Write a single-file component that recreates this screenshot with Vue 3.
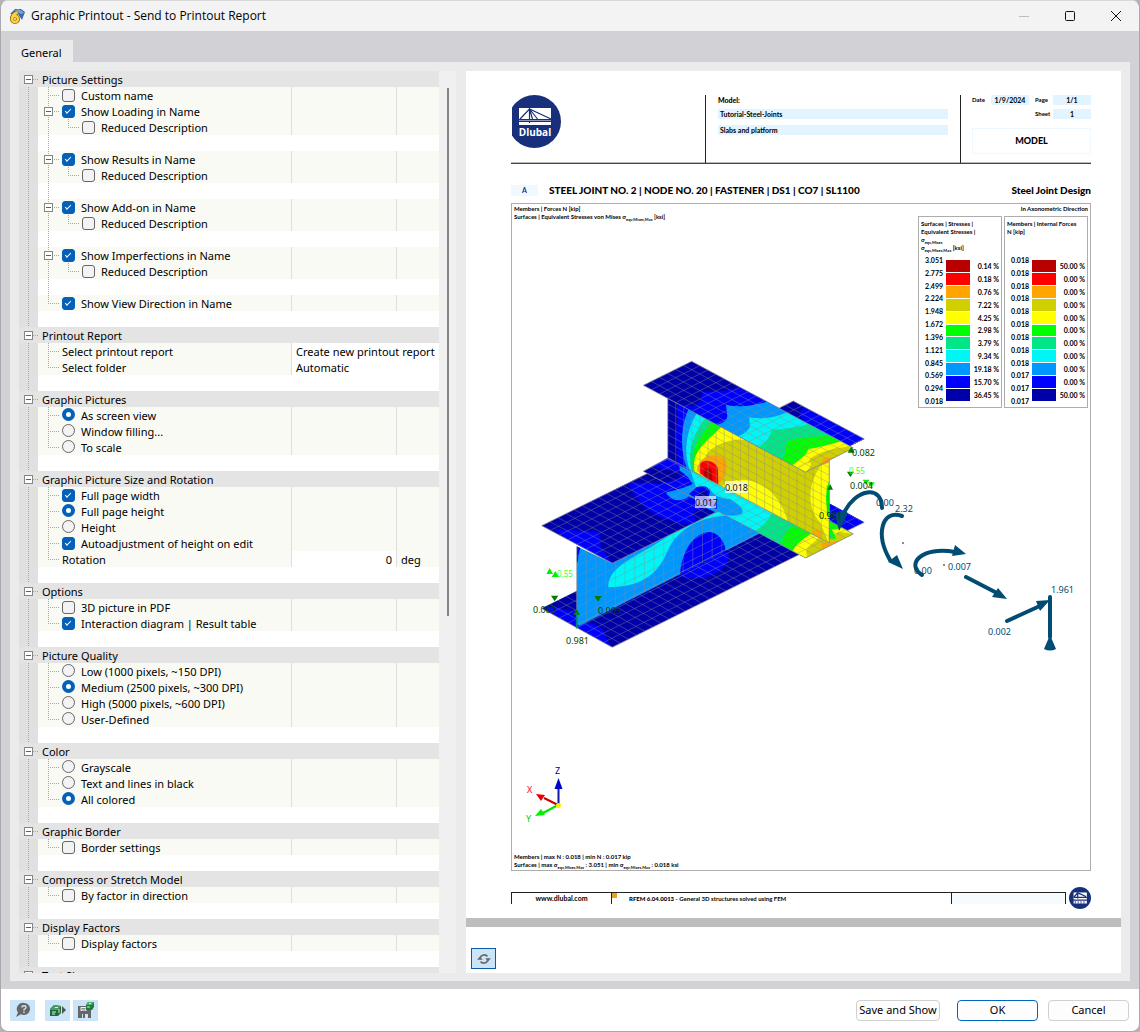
<script setup>
import { reactive, computed } from 'vue'

const check = (label, on = false, extra = {}) => ({ kind: 'checkbox', label, on, ...extra })
const radio = (label, on = false) => ({ kind: 'radio', label, on })

const sections = reactive([
  {
    title: 'Picture Settings',
    items: [
      check('Custom name'),
      check('Show Loading in Name', true, { parent: true }),
      check('Reduced Description', false, { child: true }),
      { kind: 'gap' },
      check('Show Results in Name', true, { parent: true }),
      check('Reduced Description', false, { child: true }),
      { kind: 'gap' },
      check('Show Add-on in Name', true, { parent: true }),
      check('Reduced Description', false, { child: true }),
      { kind: 'gap' },
      check('Show Imperfections in Name', true, { parent: true }),
      check('Reduced Description', false, { child: true }),
      { kind: 'gap' },
      check('Show View Direction in Name', true)
    ]
  },
  {
    title: 'Printout Report',
    items: [
      { kind: 'text', label: 'Select printout report', value: 'Create new printout report' },
      { kind: 'text', label: 'Select folder', value: 'Automatic' }
    ]
  },
  { title: 'Graphic Pictures', items: [radio('As screen view', true), radio('Window filling...'), radio('To scale')] },
  {
    title: 'Graphic Picture Size and Rotation',
    items: [
      check('Full page width', true),
      radio('Full page height', true),
      radio('Height'),
      check('Autoadjustment of height on edit', true),
      { kind: 'number', label: 'Rotation', value: '0', unit: 'deg' }
    ]
  },
  { title: 'Options', items: [check('3D picture in PDF'), check('Interaction diagram | Result table', true)] },
  {
    title: 'Picture Quality',
    items: [
      radio('Low (1000 pixels, ~150 DPI)'),
      radio('Medium (2500 pixels, ~300 DPI)', true),
      radio('High (5000 pixels, ~600 DPI)'),
      radio('User-Defined')
    ]
  },
  { title: 'Color', items: [radio('Grayscale'), radio('Text and lines in black'), radio('All colored', true)] },
  { title: 'Graphic Border', items: [check('Border settings')] },
  { title: 'Compress or Stretch Model', items: [check('By factor in direction')] },
  { title: 'Display Factors', items: [check('Display factors')] },
  { title: 'Text Size', items: [] }
])

const colors = ['#b90000', '#ff0000', '#ffa500', '#d0d000', '#ffff00', '#00ff00', '#00e687', '#00f5f5', '#0098ff', '#0000ff', '#0000a8']

const legends = [
  {
    id: 'surfaces',
    lines: ['Surfaces | Stresses |', 'Equivalent Stresses |'],
    sigma: true,
    values: ['3.051', '2.775', '2.499', '2.224', '1.948', '1.672', '1.396', '1.121', '0.845', '0.569', '0.294', '0.018'],
    shares: ['0.14 %', '0.18 %', '0.76 %', '7.22 %', '4.25 %', '2.98 %', '3.79 %', '9.34 %', '19.18 %', '15.70 %', '36.45 %']
  },
  {
    id: 'members',
    lines: ['Members | Internal Forces', 'N [kip]'],
    sigma: false,
    values: ['0.018', '0.018', '0.018', '0.018', '0.018', '0.018', '0.018', '0.018', '0.018', '0.017', '0.017', '0.017'],
    shares: ['50.00 %', '0.00 %', '0.00 %', '0.00 %', '0.00 %', '0.00 %', '0.00 %', '0.00 %', '0.00 %', '0.00 %', '50.00 %']
  }
]

// Lines of a parallelogram mesh spanned by u and v from the origin
function mesh([x, y], [ux, uy], [vx, vy], nu, nv) {
  const parts = []
  for (let i = 0; i <= nu; i++) {
    const t = i / nu
    parts.push(`M${(x + ux * t).toFixed(1)} ${(y + uy * t).toFixed(1)}l${vx} ${vy}`)
  }
  for (let j = 0; j <= nv; j++) {
    const t = j / nv
    parts.push(`M${(x + vx * t).toFixed(1)} ${(y + vy * t).toFixed(1)}l${ux} ${uy}`)
  }
  return parts.join('')
}

const grids = computed(() => ({
  top: mesh([515, 67], [485, 260], [-145, 72], 20, 6),
  web: mesh([443, 103], [485, 260], [0, 253], 20, 11),
  bottom: mesh([515, 325], [485, 260], [-145, 72], 20, 6),
  leftTop: mesh([65, 560], [755, -374], [212, 113], 31, 8),
  leftWeb: mesh([170, 622], [755, -374], [0, 243], 26, 8),
  leftBottom: mesh([65, 808], [755, -374], [212, 117], 31, 8)
}))
</script>

<template>
  <div class="window">
    <header class="titlebar">
      <svg class="app-icon" viewBox="0 0 16 16" aria-hidden="true">
        <path d="M1 6 L6 1 L12 1 L16 4 L13 12 L9 6 Z" fill="#3d6aa8" />
        <path d="M5 3 L9 1 L13 3 L15 5 L12 6 L8 4 Z" fill="#7ba2cf" />
        <path d="M8.500 4.500Q3 6.500 3 11" fill="none" stroke="#8a6a10" stroke-width="4" />
        <circle cx="6" cy="11" r="3" fill="none" stroke="#8a6a10" stroke-width="4" />
        <path d="M8.500 4.500Q3 6.500 3 11" fill="none" stroke="#ffd23a" stroke-width="2.400" />
        <circle cx="6" cy="11" r="3" fill="none" stroke="#ffd23a" stroke-width="2.400" />
      </svg>
      <h1>Graphic Printout - Send to Printout Report</h1>
      <div class="controls">
        <button type="button" aria-label="Minimize"><svg viewBox="0 0 12 12"><path d="M1 6.500h10" stroke="#bdbdbd" /></svg></button>
        <button type="button" aria-label="Maximize"><svg viewBox="0 0 12 12"><rect x="1.500" y="1.500" width="9" height="9" rx="1" fill="none" stroke="#111" /></svg></button>
        <button type="button" aria-label="Close"><svg viewBox="0 0 12 12"><path d="M1 1l10 10M11 1L1 11" stroke="#111" /></svg></button>
      </div>
    </header>

    <main class="body">
      <nav class="tabs"><button type="button" class="tab">General</button></nav>
      <div class="panel">
        <div class="settings">
          <div class="tree">
            <section v-for="(section, s) in sections" :key="section.title">
              <div class="row head">
                <span class="gutter"><button type="button" class="expander" :aria-label="'Collapse ' + section.title"></button></span>
                <h2>{{ section.title }}</h2>
              </div>
              <div
                v-for="(item, i) in section.items"
                :key="i"
                class="row"
                :class="{ blank: item.kind === 'gap', last: i === section.items.length - 1, wide: item.kind === 'text' }"
              >
                <span class="gutter"></span>
                <span class="name">
                  <span class="stem" :class="{ pass: item.kind === 'gap' || item.child }">
                    <button v-if="item.parent" type="button" class="expander" :aria-label="'Collapse ' + item.label"></button>
                  </span>
                  <span v-if="item.child" class="stem sub"></span>
                  <label v-if="item.kind === 'checkbox' || item.kind === 'radio'">
                    <input
                      :type="item.kind"
                      :name="item.kind === 'radio' ? 'group' + s : undefined"
                      :checked="item.on"
                    />
                    {{ item.label }}
                  </label>
                  <span v-else>{{ item.label }}</span>
                </span>
                <template v-if="item.kind !== 'gap'">
                  <span class="value" :class="{ edit: item.kind === 'number' || item.kind === 'text', num: item.kind === 'number' }">{{ item.value }}</span>
                  <span v-if="item.kind !== 'text'" class="unit">{{ item.unit }}</span>
                </template>
              </div>
              <div class="row blank"><span class="gutter"></span></div>
            </section>
          </div>
          <div class="scroll"><div class="thumb"></div></div>
        </div>

        <div class="preview">
          <article class="sheet">
            <div class="sheet-head">
              <svg class="logo" viewBox="0 0 49 53" aria-label="Dlubal">
                <circle cx="22.500" cy="26.500" r="26.500" fill="#182f7c" />
                <path d="M7 13h32v17H7z" fill="#fff" />
                <path d="M17.500 13v15M8 24l9.500-10L39 24M17.500 14l3 10M17.500 14l8 10" fill="none" stroke="#182f7c" stroke-width="1.200" />
                <path d="M7 25.500h32" stroke="#182f7c" stroke-width="3" />
                <path d="M7 25.500h32" stroke="#fff" stroke-width=".5" />
                <text x="23" y="41" text-anchor="middle" font-size="10" font-weight="700" fill="#fff" font-family="Open Sans, sans-serif">Dlubal</text>
              </svg>
              <div class="model">
                <b>Model:</b>
                <span class="fill">Tutorial-Steel-Joints</span>
                <span class="fill">Slabs and platform</span>
              </div>
              <div class="meta">
                <div class="meta-grid">
                  <span>Date</span><span class="fill">1/9/2024</span><span>Page</span><span class="fill">1/1</span>
                  <span class="sheet-label">Sheet</span><span class="fill">1</span>
                </div>
                <b class="stamp">MODEL</b>
              </div>
            </div>

            <div class="caption">
              <span class="mark">A</span>
              <h3>STEEL JOINT NO. 2 | NODE NO. 20 | FASTENER | DS1 | CO7 | SL1100</h3>
              <b>Steel Joint Design</b>
            </div>

            <div class="frame">
              <svg class="scene" viewBox="512 205 578 666" aria-label="Steel joint stresses">
                <defs>
                  <clipPath id="c-top"><path d="M515 67L1000 327L857 400L370 139Z" /></clipPath>
                  <clipPath id="c-web"><path d="M443 178L857 400L928 364V612L443 357Z" /></clipPath>
                  <clipPath id="c-bottom"><path d="M443 357L928 612V545L1000 585L857 657L370 397Z" /></clipPath>
                  <clipPath id="c-ltop"><path d="M65 560L277 673L1033 300L820 186Z" /></clipPath>
                  <clipPath id="c-lweb"><path d="M170 622L275 672L640 490L760 560L720 583L170 865Z" /></clipPath>
                  <clipPath id="c-lbottom"><path d="M65 808L277 925L1033 550L820 435Z" /></clipPath>
                </defs>
                <g transform="translate(520 340) scale(.3333)">
                  <g clip-path="url(#c-lbottom)">
                    <path d="M0 400h1100v560H0z" fill="#0000a8" />
                    <path d="M80 800L170 820L190 850Q235 855 250 875L272 925H240L65 815ZM483 712Q540 730 600 695Q632 670 625 640L550 640ZM900 470L1033 550L985 572L900 540Z" fill="#00f" />
                    <path class="mesh" :d="grids.leftBottom" />
                  </g>
                  <path d="M65 808L277 925L1033 550" class="edge" />
                  <g clip-path="url(#c-lweb)">
                    <path d="M150 480h650v400H150z" fill="#0098ff" />
                    <path d="M165 618L182 625Q176 640 173 670H165Z" fill="#00f" />
                    <path d="M265 745C262 690 330 660 400 620C480 570 540 520 610 518L615 530C540 535 480 570 450 620C425 680 400 715 340 735Q300 745 265 745Z" fill="#00f5f5" />
                    <path d="M480 712C483 640 520 580 570 579C612 585 622 640 615 645ZM165 862L172 855L180 862Z" fill="#00f" />
                    <path d="M540 670L548 655L558 668Z" fill="#0000a8" />
                    <path class="mesh" :d="grids.leftWeb" />
                  </g>
                  <path d="M170 622V868M170 858L720 580" class="edge" />
                  <g clip-path="url(#c-ltop)">
                    <path d="M0 150h1100v560H0z" fill="#0000a8" />
                    <path d="M325 432C355 495 400 550 530 558L520 520Q550 500 640 480L500 340L375 400Q430 390 490 405C480 425 440 438 415 435Q370 430 325 432ZM100 570Q160 575 235 578Q245 605 240 625Q265 650 277 680L200 640ZM850 205L1033 295V310L980 320L855 250Q830 225 850 205Z" fill="#00f" />
                    <path d="M440 460Q480 450 520 440L515 410Q480 395 478 380L560 420L650 480Q680 510 660 528L610 530L560 508Q545 480 510 470Q470 500 440 465Z" fill="#0098ff" />
                    <path class="mesh" :d="grids.leftTop" />
                  </g>
                  <path d="M65 560L277 673L600 514M65 560L385 403M780 206L820 186L1033 300L1000 315" class="edge" />
                  <g clip-path="url(#c-bottom)">
                    <path d="M300 300h800v400H300z" fill="#00f" />
                    <path d="M370 397L400 382L430 390Q480 395 490 405Q470 430 430 430Z" fill="#0000a8" />
                    <path d="M478 380Q520 395 580 430L980 660H800L530 495L490 485Q445 480 440 460Q500 445 518 435Q505 410 480 395Z" fill="#0098ff" />
                    <path d="M508 385L528 445Q545 440 570 450Q585 480 630 480Q680 510 664 525Q640 535 605 525L725 585L857 657H980L560 400Z" fill="#00f5f5" />
                    <path d="M507 465L530 445Q565 435 570 460L565 475L590 490V510L560 500L530 480Z" fill="#00f" />
                    <path d="M530 462L560 450V490L548 475Z" fill="#0000a8" />
                    <path d="M755 525Q735 560 705 575L857 657H1000V580Z" fill="#00e687" />
                    <path d="M820 560Q785 585 785 615L857 660H1000V530L910 545L940 600Z" fill="#0f0" />
                    <path d="M872 585Q830 610 815 640L857 660H1010V560L935 572L960 610Z" fill="#ff0" />
                    <path d="M895 597L870 620Q850 635 865 657L930 620L1005 585L955 578Q940 590 950 600Z" fill="#d0d000" />
                    <path d="M905 615Q920 605 955 610L905 635Z" fill="#ffa500" />
                    <path class="mesh" :d="grids.bottom" />
                  </g>
                  <path d="M443 357L370 397L857 657L1000 585L928 545" class="edge" />
                  <g clip-path="url(#c-web)">
                    <path d="M430 80h520v560H430z" fill="#0000a8" />
                    <path d="M470 180Q475 240 468 290Q470 340 475 380L950 640V300Z" fill="#00f" />
                    <path d="M510 200C480 260 480 330 500 388L950 640V300Z" fill="#0098ff" />
                    <path d="M532 220C500 270 488 340 510 395L950 640V300Z" fill="#00f5f5" />
                    <path d="M558 235C515 290 502 340 515 397L950 640V300Z" fill="#00e687" />
                    <path d="M585 240C530 300 508 340 520 398L950 640V300Z" fill="#0f0" />
                    <path d="M608 260C545 320 515 340 524 398L950 640V300Z" fill="#ff0" />
                    <path d="M720 325Q690 300 650 302C590 310 545 335 540 410L950 640V300Z" fill="#d0d000" />
                    <path d="M530 395C535 340 615 335 621 375C620 410 605 430 590 440Z" fill="#ffa500" />
                    <path d="M540 403V378C545 355 590 365 594 390L595 438Z" fill="#f00" />
                    <path d="M551 410V392Q562 380 575 392L578 430Z" fill="#b90000" />
                    <path d="M600 445Q640 415 690 425C760 440 795 510 803 550Z" fill="#ff0" />
                    <path d="M912 370C860 425 860 510 900 550L928 615V370Z" fill="#ff0" />
                    <path d="M928 425C915 460 915 495 928 540Z" fill="#0f0" />
                    <path d="M878 588Q880 568 898 572L908 605ZM900 379L928 362V370Q915 378 900 379Z" fill="#ffa500" />
                    <path class="mesh" :d="grids.web" />
                  </g>
                  <path d="M443 178V357L928 612V364" class="edge" />
                  <path d="M924 440V530" stroke="#00e600" stroke-width="7" />
                  <g clip-path="url(#c-top)">
                    <path d="M360 60h660v360H360z" fill="#0000a8" />
                    <path d="M548 160Q600 160 655 148L760 190L1000 327L857 400L475 195Q530 215 545 180Z" fill="#00f" />
                    <path d="M618 198Q680 210 750 185L1000 327L857 400L590 258Q622 250 622 230Z" fill="#0098ff" />
                    <path d="M687 235Q750 245 800 220L1000 330L857 400L655 292Q690 275 690 260Z" fill="#00f5f5" />
                    <path d="M755 272Q830 268 865 254L1000 327L857 400L715 324Q750 305 755 272Z" fill="#00e687" />
                    <path d="M805 305Q860 290 950 292L1000 327L857 400L780 366Q800 350 795 325Z" fill="#0f0" />
                    <path d="M815 380Q860 350 865 330Q900 325 970 305L1000 327L857 400Z" fill="#ff0" />
                    <path d="M832 388Q865 378 870 360Q900 335 985 322L1005 327L857 400Q880 375 870 370Z" fill="#d0d000" />
                    <path d="M903 372Q905 352 945 353L920 368Z" fill="#ffa500" />
                    <path class="mesh" :d="grids.top" />
                  </g>
                  <path d="M515 67L1000 327L857 400L370 139Z" class="edge" />

                  <g fill="#007c00">
                    <path d="M93 770h22l-11 17zM223 771h22l-11 17zM160 828l10-18 10 18zM983 341l11-18 10 18zM981 398h21l-11 16zM922 452l9-16 8 16z" />
                    <path d="M170 822v46" stroke="#008080" stroke-width="5" />
                  </g>
                  <path d="M79 705l10-18 10 18zM95 714l11-18 11 18zM1028 422h20l-10 15zM1044 430h20l-10 16z" fill="#00f000" />
                </g>

                <g fill="none" stroke="#004c73" stroke-width="4" stroke-linecap="round">
                  <path d="M882 509C882 485 855 490 844 514" />
                  <path d="M902 517C882 510 875 535 890 561" />
                  <path d="M922 576C905 565 922 547 955 553" />
                  <path d="M966 578L995 593M1007 622L1042 606M1050 598V638" />
                </g>
                <path d="M839 532L835 515Q842 509 848 514ZM903 570L888 563L897 556ZM966 555L952 557L955 546ZM1007 600L992 598L998 589ZM1050 601L1040 612L1036 602ZM1050 636L1056 650Q1050 653 1044 650Z" fill="#004c73" />
                <g fill="#666"><circle cx="903" cy="544" r="1" /><circle cx="944" cy="566" r="1" /></g>

                <g class="tag">
                  <path d="M725 482h23v12h-23zM695 497h21v12h-21z" fill="#fff" fill-opacity=".65" />
                  <text x="725" y="492" fill="#111">0.018</text>
                  <text x="695" y="507" fill="#111">0.017</text>
                  <g fill="#004400">
                    <text x="852" y="457">0.082</text><text x="850" y="490">0.004</text><text x="819" y="520">0.981</text>
                    <text x="533" y="614">0.080</text><text x="598" y="615">0.003</text><text x="566" y="645">0.981</text>
                  </g>
                  <g fill="#004c73">
                    <text x="876" y="507">0.00</text><text x="895" y="513">2.32</text><text x="914" y="575">0.00</text>
                    <text x="948" y="571">0.007</text><text x="988" y="636">0.002</text><text x="1051" y="594">1.961</text>
                  </g>
                  <g fill="#33ff33" class="small"><text x="557" y="578">0.55</text><text x="849" y="475">0.55</text></g>
                </g>

                <g fill="none" stroke-width="2">
                  <path d="M558.500 806V790" stroke="#1414a0" /><path d="M558 806L544 799" stroke="#c80000" /><path d="M558 806L543 814" stroke="#00e600" />
                </g>
                <path d="M558.500 779l4 11h-8z" fill="#0000c8" />
                <path d="M536 795l9 1-4 6z" fill="#e60000" />
                <path d="M535 817l6-7 4 6z" fill="#00f000" />
                <circle cx="558.500" cy="806.500" r="2.500" fill="#ffe600" />
                <g class="tag"><text x="555" y="775" fill="#0000a8">Z</text><text x="527" y="794" fill="#f00">X</text><text x="526" y="823" fill="#00d000">Y</text></g>
              </svg>

              <div class="frame-text">
                <div class="frame-top">
                  <p>Members | Forces N [kip]<br />Surfaces | Equivalent Stresses von Mises σ<sub>eqv,Mises,Max</sub> [ksi]</p>
                  <div class="legend-side">
                    <span class="direction">In Axonometric Direction</span>
                    <div class="legends">
                      <section v-for="legend in legends" :key="legend.id" class="legend">
                        <p class="legend-title">
                          <template v-for="line in legend.lines" :key="line">{{ line }}<br /></template>
                          <template v-if="legend.sigma">σ<sub>eqv,Mises</sub><br />σ<sub>eqv,Mises,Max</sub> [ksi]</template>
                        </p>
                        <div class="scale">
                          <div class="col values"><span v-for="(v, i) in legend.values" :key="i">{{ v }}</span></div>
                          <div class="col bars"><span v-for="c in colors" :key="c" :style="{ background: c }"></span></div>
                          <div class="col shares"><span v-for="(v, i) in legend.shares" :key="i">{{ v }}</span></div>
                        </div>
                      </section>
                    </div>
                  </div>
                </div>
                <p class="frame-bottom">
                  Members | max N : 0.018 | min N : 0.017 kip<br />Surfaces | max σ<sub>eqv,Mises,Max</sub> : 3.051 | min σ<sub>eqv,Mises,Max</sub> : 0.018 ksi
                </p>
              </div>
            </div>

            <footer class="sheet-foot">
              <div class="foot-line">
                <a href="#">www.dlubal.com</a>
                <span class="program"><i></i><b>RFEM 6.04.0013</b>&nbsp;- General 3D structures solved using FEM</span>
                <span class="foot-blank"></span>
              </div>
              <svg class="mini-logo" viewBox="0 0 49 53" aria-hidden="true">
                <circle cx="24.500" cy="26.500" r="26.500" fill="#182f7c" />
                <path d="M9 13h32v17H9zM9 33h32v7H9z" fill="#fff" />
                <path d="M9 25h32M19 13v15M10 24l9-10L39 23" fill="none" stroke="#182f7c" stroke-width="3" />
                <path d="M13 34v6M20 34v6M27 34v6M34 34v6" stroke="#182f7c" stroke-width="2" />
              </svg>
            </footer>
          </article>
          <div class="splitter"></div>
          <div class="preview-tools">
            <button type="button" class="refresh" aria-label="Refresh">
              <svg viewBox="0 0 16 14">
                <path d="M3.500 5.500A5 5 0 0 1 12 4M12.500 8.500A5 5 0 0 1 4 10" fill="none" stroke="#666" stroke-width="2" />
                <path d="M9.500 6h6.500l-3.200 4zM0 8l3.200-4L6.500 8z" fill="#666" />
              </svg>
            </button>
          </div>
        </div>
      </div>
    </main>

    <footer class="actions">
      <div class="tools">
        <button type="button" aria-label="Help">
          <svg viewBox="0 0 16 16"><path d="M9 1a6 6 0 1 1-3 11.200L1 15l2-4.500A6 6 0 0 1 9 1z" fill="#666" /><path d="M7 5.500Q7 3.800 9 3.800T11 5.500Q11 6.500 9 7.500V8.500M9 9.500v1.500" fill="none" stroke="#cce4f7" stroke-width="1.400" /></svg>
        </button>
        <button type="button" aria-label="Default settings" class="second">
          <svg viewBox="0 0 16 16"><path d="M0 7l4-4 7 1v7l-3 3H0z" fill="#1f6a3a" /><path d="M4 3l7 1-3 4H0z" fill="#4a9c66" /><path d="M2 10h4M2 12h3M5 5.500h3M9 7v4" stroke="#d8f0df" /><path d="M12 4v8l4-4z" fill="#555" /></svg>
        </button>
        <button type="button" aria-label="Save settings">
          <svg viewBox="0 0 16 16"><path d="M0 4h9v4h4v8H0z" fill="#666" /><path d="M2.500 5h6v4h-6z" fill="#e8f2fb" /><path d="M3.500 6.500h4M3.500 8h4" stroke="#888" /><path d="M4 12h6v4H4z" fill="#cce4f7" /><path d="M6 12v4" stroke="#666" stroke-width="2" /><path d="M8 3l2-3h6v5l-2 3H8z" fill="#1f7a3f" /><path d="M10 0h6l-2 3H8z" fill="#4fae6e" /><path d="M9 5h3M11 1.500h2" stroke="#d8f0df" /></svg>
        </button>
      </div>
      <div class="buttons">
        <button type="button">Save and Show</button>
        <button type="button" class="primary">OK</button>
        <button type="button">Cancel</button>
      </div>
    </footer>
  </div>
</template>

<style>
body {
  background: #b4b4b8;
}
</style>

<style scoped>
.window {
  display: flex;
  flex-direction: column;
  height: 100vh;
  box-sizing: border-box;
  border: 1px solid #a9a9ad;
  border-top-color: #d8d8d8;
  border-radius: 8px;
  overflow: hidden;
  background: #fff;
  color: #000;
  font: 11px/16px "Noto Sans", sans-serif;
}
h1, h2, h3, p { margin: 0; font-weight: inherit; }
button { font: inherit; color: inherit; margin: 0; padding: 0; }

.titlebar {
  display: flex;
  align-items: center;
  height: 30px;
  flex: none;
  padding-left: 8px;
  background: #f3f3f3;
}
.app-icon { width: 16px; height: 16px; margin-right: 6px; }
.titlebar h1 { flex: 1; font: 12px/16px "Open Sans", sans-serif; }
.controls { display: flex; }
.controls button {
  display: grid;
  place-items: center;
  width: 46px;
  height: 30px;
  border: 0;
  background: none;
}
.controls svg { width: 12px; height: 12px; }

.body {
  display: flex;
  flex-direction: column;
  flex: 1;
  min-height: 0;
  padding: 9px 9px 8px;
  background: #d2d1d6;
}
.tabs { display: flex; flex: none; }
.tab {
  height: 22px;
  padding: 4px 11px 0;
  border: 0;
  background: #ebebeb;
}
.panel {
  display: flex;
  gap: 10px;
  flex: 1;
  min-height: 0;
  padding: 9px 9px 8px;
  background: #ebebeb;
}

.settings { display: flex; width: 437px; flex: none; overflow: hidden; }
.tree { flex: 1; overflow: hidden; background: #fff; }
.scroll { width: 17px; background: #f0f0f0; }
.thumb { width: 2px; height: 58.500%; margin: 17px 0 0 8px; background: #858585; }
.row { display: flex; height: 16px; }
.row.head { width: 420px; background: #e4e4e4; }
.row:not(.head) { background: #f9faf4; }
.row.blank { background: #fff; }
.gutter {
  width: 19px;
  flex: none;
  box-sizing: border-box;
  padding: 4px 0 0 5px;
  background: repeating-linear-gradient(#a8a8a8 0 1px, transparent 1px 2px) 9px 0 / 1px 100% no-repeat #e0e0e0;
}
.head .gutter {
  background: repeating-linear-gradient(90deg, #a8a8a8 0 1px, transparent 1px 2px) 14px 8px / 5px 1px no-repeat;
}
h2 { font-size: 11px; line-height: 18px; padding-left: 4px; }
.expander {
  display: block;
  width: 9px;
  height: 9px;
  box-sizing: border-box;
  border: 1px solid #858585;
  background: linear-gradient(#606060, #606060) 1px 3px / 5px 1px no-repeat #fff;
}
.name { display: flex; flex: 1; line-height: 18px; }
.stem {
  width: 24px;
  box-sizing: border-box;
  padding: 4px 0 0 6px;
  background:
    repeating-linear-gradient(#a8a8a8 0 1px, transparent 1px 2px) 10px 0 / 1px 16px no-repeat,
    repeating-linear-gradient(90deg, #a8a8a8 0 1px, transparent 1px 2px) 10px 8px / 11px 1px no-repeat;
}
.row.last .stem { background-size: 1px 8px, 11px 1px; }
.stem.pass { background-size: 1px 16px, 0 0; }
.stem.sub { width: 20px; padding: 0; background-position: 6px 0, 6px 8px; background-size: 1px 8px, 11px 1px; }
label { display: flex; gap: 6px; }
input {
  appearance: none;
  width: 13px;
  height: 13px;
  margin: 2px 0 0;
  box-sizing: border-box;
  border: 1px solid #666;
  border-radius: 3px;
  background: #f3f3f5;
}
input[type="radio"] { margin-top: 1px; border-radius: 50%; }
input[type="checkbox"]:checked { border-color: #0560b8; background: #0560b8; }
input[type="checkbox"]:checked::before {
  content: "";
  display: block;
  width: 5px;
  height: 2px;
  margin: 3px 0 0 2px;
  border: solid #fff;
  border-width: 0 0 1px 1px;
  transform: rotate(-45deg);
}
input[type="radio"]:checked { border: 4px solid #0560b8; background: #fff; }
.value {
  width: 105px;
  box-sizing: border-box;
  padding: 0 4px;
  border-left: 1px solid #dedede;
  line-height: 18px;
  white-space: nowrap;
}
.value.edit { background: #fff; }
.value.num { text-align: right; }
.unit { width: 43px; box-sizing: border-box; padding-left: 4px; border-left: 1px solid #dedede; line-height: 18px; }
.wide .value { width: 148px; }

.preview { display: flex; flex-direction: column; flex: 1; min-width: 0; background: #fff; }
.sheet {
  display: flex;
  flex-direction: column;
  flex: 1;
  min-height: 0;
  padding: 24px 30px 9px 45px;
  box-sizing: border-box;
  font: 700 7px/8px Lato, sans-serif;
}
.fill { background: #e1f4ff; }
.sheet-head { display: flex; height: 68px; border-bottom: 1px solid #444; box-shadow: inset 0 -1px #bbb; }
.logo { width: 49px; height: 53px; margin-left: 1px; }
.model {
  display: flex;
  flex-direction: column;
  gap: 6px;
  flex: 1;
  margin-left: 144px;
  padding: 2px 12px 0;
  border-left: 1px solid #222;
}
.model .fill { padding: 1px 2px; line-height: 8px; }
.model b { line-height: 6px; }
.meta { width: 119px; padding-left: 11px; border-left: 1px solid #222; }
.meta-grid { display: grid; grid-template-columns: 19px 38px 24px 38px; gap: 4px 0; line-height: 10px; }
.meta-grid .fill { text-align: center; }
.sheet-label { grid-column: 3; }
.meta-grid span:nth-child(3), .sheet-label { padding-left: 6px; font-size: 6px; }
.meta-grid span:first-child { font-size: 6px; }
.stamp {
  display: block;
  margin-top: 9px;
  border: 1px solid #eef8ff;
  font-size: 9px;
  font-weight: 900;
  line-height: 24px;
  text-align: center;
}
.caption { display: flex; align-items: center; height: 12px; margin: 20px 0 7px; font-size: 10px; line-height: 12px; }
.caption h3 { flex: 1; margin-left: 11px; font-size: 10px; font-weight: 900; white-space: nowrap; }
.caption b { font-weight: 900; }
.mark { width: 27px; background: #f0f9ff; color: #182f7c; font-size: 7px; line-height: 11px; text-align: center; }

.frame { display: grid; flex: 1; min-height: 0; border: 1px solid #adadad; }
.scene { grid-area: 1 / 1; width: 100%; height: 100%; min-height: 0; }
.mesh { fill: none; stroke: #8c8c96; stroke-width: 2; stroke-opacity: .6; }
.edge { fill: none; stroke: #8c8c96; stroke-width: 2; }
.tag { font: 400 9px "Noto Sans", sans-serif; }
.small { font-size: 8px; }
.frame-text {
  grid-area: 1 / 1;
  display: flex;
  flex-direction: column;
  justify-content: space-between;
  padding: 1px 2px;
  font-size: 6px;
}
sub { font-size: 4px; line-height: 0; }
.frame-top { display: flex; justify-content: space-between; }
.legend-side { display: flex; flex-direction: column; text-align: right; }
.legends { display: flex; gap: 2px; margin-top: 3px; text-align: left; }
.legend { display: flex; flex-direction: column; width: 84px; box-sizing: border-box; border: 1px solid #adadad; padding: 3px 2px 0; }
.legend-title { height: 34px; line-height: 8px; white-space: nowrap; }
.scale { display: flex; height: 153px; gap: 3px; line-height: 12px; }
.col { display: flex; flex-direction: column; justify-content: space-between; }
.values { width: 22px; font-size: 7px; text-align: right; }
.bars { width: 24px; margin: 6px 0; gap: 1px; }
.bars span { flex: 1; }
.shares { flex: 1; margin: 6px 0; font-size: 7px; text-align: right; white-space: nowrap; }

.sheet-foot { display: flex; align-items: center; gap: 3px; height: 22px; margin-top: 16px; }
.foot-line { display: flex; flex: 1; height: 11px; border: solid #222; border-width: 1px 1px 0; line-height: 11px; font-size: 6px; }
.foot-line a { width: 99px; text-align: center; color: inherit; text-decoration: none; border-right: 1px solid #222; font-size: 7px; }
.program { display: flex; flex: 1; border-right: 1px solid #222; }
.program i { width: 5px; height: 5px; margin-right: 12px; background: #eca01c; }
.program b { font-weight: 900; }
.foot-blank { width: 113px; background: #f5fbff; }
.mini-logo { width: 22px; height: 22px; }
.splitter { height: 9px; flex: none; background: #bdbdbd; }
.preview-tools { height: 46px; flex: none; display: flex; align-items: flex-end; padding: 0 5px 4px; box-sizing: border-box; }
.refresh {
  display: grid;
  place-items: center;
  width: 25px;
  height: 21px;
  border: 1px solid #0a5aa5;
  background: #cce4f7;
}
.refresh svg { width: 14px; height: 12px; }

.actions { display: flex; justify-content: space-between; align-items: center; height: 42px; flex: none; padding: 0 10px 0 9px; }
.tools, .buttons { display: flex; }
.tools { gap: 3px; }
.tools button { display: grid; place-items: center; width: 25px; height: 21px; border: 0; background: #cce4f7; }
.tools .second { margin-left: 7px; }
.tools svg { width: 16px; height: 16px; }
.buttons button {
  width: 81px;
  height: 21px;
  margin-left: 10px;
  border: 1px solid #d0d0d0;
  border-radius: 4px;
  background: #fdfdfd;
  white-space: nowrap;
}
.buttons button:first-child { width: 84px; margin-right: 7px; }
.buttons .primary { border-color: #0067c0; }
</style>
